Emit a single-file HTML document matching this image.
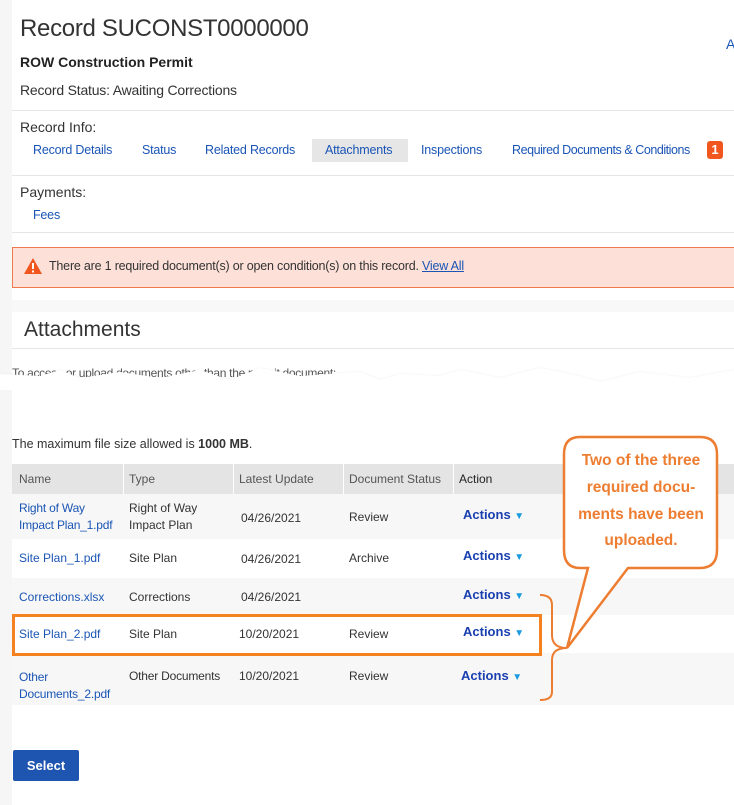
<!DOCTYPE html>
<html><head><style>
body{margin:0;width:734px;height:805px;background:#fff;font-family:"Liberation Sans",sans-serif;position:relative;overflow:hidden;font-size:12px;color:#333}
.a{position:absolute;white-space:nowrap}
a,.l{color:#1a55b5;text-decoration:none}
.n{font-size:12.5px;letter-spacing:-0.2px}
</style></head><body>
<div class="a" style="left:0;top:0;width:12px;height:805px;background:#f6f6f6"></div>
<div class="a" style="left:12px;top:300px;width:722px;height:12px;background:#f8f8f8"></div>
<div class="a" style="left:20px;top:15px;font-size:24px;color:#333;letter-spacing:-0.3px">Record SUCONST0000000</div>
<div class="a" style="left:726px;top:36px;font-size:14px;color:#1a55b5">A</div>
<div class="a" style="left:20px;top:54px;font-size:14px;font-weight:bold;color:#222">ROW Construction Permit</div>
<div class="a" style="left:20px;top:82px;font-size:14px;letter-spacing:-0.2px">Record Status: Awaiting Corrections</div>
<div class="a" style="left:12px;top:110px;width:722px;border-top:1px solid #e6e6e6"></div>
<div class="a" style="left:20px;top:119px;font-size:14px">Record Info:</div>
<div class="a" style="left:312px;top:139px;width:96px;height:23px;background:#e6e6e6"></div>
<div class="a l n" style="left:33px;top:143px">Record Details</div>
<div class="a l n" style="left:142px;top:143px">Status</div>
<div class="a l n" style="left:205px;top:143px">Related Records</div>
<div class="a l n" style="left:325px;top:143px">Attachments</div>
<div class="a l n" style="left:421px;top:143px">Inspections</div>
<div class="a l n" style="left:512px;top:143px;letter-spacing:-0.45px">Required Documents &amp; Conditions</div>
<div class="a" style="left:707px;top:141px;width:16px;height:18px;background:#f0561e;border-radius:3px;color:#fff;font-weight:bold;font-size:13px;text-align:center;line-height:18px">1</div>
<div class="a" style="left:12px;top:175px;width:722px;border-top:1px solid #e6e6e6"></div>
<div class="a" style="left:20px;top:184px;font-size:14px">Payments:</div>
<div class="a l n" style="left:33px;top:208px">Fees</div>
<div class="a" style="left:12px;top:232px;width:722px;border-top:1px solid #e6e6e6"></div>
<div class="a" style="left:12px;top:247px;width:722px;height:39px;background:#fde0d8;border:1px solid #f0784d;border-right:none"></div>
<svg class="a" style="left:23px;top:257px" width="20" height="18"><path d="M10 1 L19 17 L1 17Z" fill="#f0561e"/><rect x="9" y="6" width="2" height="6" fill="#fff"/><rect x="9" y="13.5" width="2" height="2" fill="#fff"/></svg>
<div class="a" style="left:49px;top:259px;font-size:12.5px;letter-spacing:-0.2px;color:#333">There are 1 required document(s) or open condition(s) on this record. <span style="color:#1a55b5;text-decoration:underline">View All</span></div>
<div class="a" style="left:24px;top:318px;font-size:21px;color:#333">Attachments</div>
<div class="a" style="left:12px;top:348px;width:722px;border-top:1px solid #e6e6e6"></div>
<div class="a" style="left:12px;top:366px;font-size:12px;color:#555;letter-spacing:-0.3px">To access or upload documents other than the permit document:</div>
<svg class="a" style="left:0;top:360px" width="734" height="30">
<defs><filter id="s"><feDropShadow dx="0" dy="2" stdDeviation="1.5" flood-color="#666" flood-opacity="0.7"/></filter></defs>
<path d="M0 14 L40 16 L60 10 L80 18 L120 12 L160 18 L200 10 L230 20 L260 8 L300 16 L360 12 L380 20 L400 14 L440 16 L460 10 L500 18 L540 8 L580 16 L600 22 L640 12 L690 18 L734 10 L734 30 L0 30Z" fill="#fff" filter="url(#s)"/></svg>
<div class="a" style="left:12px;top:437px;font-size:12.5px;color:#333">The maximum file size allowed is <b>1000 MB</b>.</div>
<div class="a" style="left:12px;top:464px;width:722px;height:30px;background:#e4e4e4"></div>
<div class="a" style="left:123px;top:464px;width:1px;height:30px;background:#fff"></div>
<div class="a" style="left:233px;top:464px;width:1px;height:30px;background:#fff"></div>
<div class="a" style="left:343px;top:464px;width:1px;height:30px;background:#fff"></div>
<div class="a" style="left:453px;top:464px;width:1px;height:30px;background:#fff"></div>
<div class="a" style="left:19px;top:472px;color:#555">Name</div>
<div class="a" style="left:129px;top:472px;color:#555">Type</div>
<div class="a" style="left:239px;top:472px;color:#555">Latest Update</div>
<div class="a" style="left:349px;top:472px;color:#555">Document Status</div>
<div class="a" style="left:459px;top:472px;color:#222">Action</div>
<div class="a" style="left:12px;top:494px;width:722px;height:45px;background:#f7f7f7"></div>
<div class="a" style="left:12px;top:578px;width:722px;height:37px;background:#f7f7f7"></div>
<div class="a" style="left:12px;top:653px;width:722px;height:52px;background:#f7f7f7"></div>
<div class="a l" style="left:19px;top:500px;line-height:17px;letter-spacing:-0.2px">Right of Way<br>Impact Plan_1.pdf</div>
<div class="a" style="left:129px;top:500px;line-height:17px">Right of Way<br>Impact Plan</div>
<div class="a" style="left:241px;top:511px">04/26/2021</div>
<div class="a" style="left:349px;top:510px">Review</div>
<div class="a l" style="left:19px;top:551px">Site Plan_1.pdf</div>
<div class="a" style="left:129px;top:551px">Site Plan</div>
<div class="a" style="left:241px;top:552px">04/26/2021</div>
<div class="a" style="left:349px;top:551px">Archive</div>
<div class="a l" style="left:19px;top:590px">Corrections.xlsx</div>
<div class="a" style="left:129px;top:590px">Corrections</div>
<div class="a" style="left:241px;top:590px">04/26/2021</div>
<div class="a l" style="left:19px;top:627px">Site Plan_2.pdf</div>
<div class="a" style="left:129px;top:627px">Site Plan</div>
<div class="a" style="left:239px;top:627px">10/20/2021</div>
<div class="a" style="left:349px;top:627px">Review</div>
<div class="a l" style="left:19px;top:669px;line-height:17px;letter-spacing:-0.2px">Other<br>Documents_2.pdf</div>
<div class="a" style="left:129px;top:669px;letter-spacing:-0.2px">Other Documents</div>
<div class="a" style="left:239px;top:669px">10/20/2021</div>
<div class="a" style="left:349px;top:669px">Review</div>
<div class="a" style="left:463px;top:507px;color:#1a40b0;font-weight:bold;font-size:13px">Actions <span style="color:#1a9be0;font-size:10px">▼</span></div>
<div class="a" style="left:463px;top:548px;color:#1a40b0;font-weight:bold;font-size:13px">Actions <span style="color:#1a9be0;font-size:10px">▼</span></div>
<div class="a" style="left:463px;top:587px;color:#1a40b0;font-weight:bold;font-size:13px">Actions <span style="color:#1a9be0;font-size:10px">▼</span></div>
<div class="a" style="left:463px;top:624px;color:#1a40b0;font-weight:bold;font-size:13px">Actions <span style="color:#1a9be0;font-size:10px">▼</span></div>
<div class="a" style="left:461px;top:668px;color:#1a40b0;font-weight:bold;font-size:13px">Actions <span style="color:#1a9be0;font-size:10px">▼</span></div>
<div class="a" style="left:12px;top:614px;width:524px;height:36px;border:3px solid #f58220"></div>
<div class="a" style="left:13px;top:750px;width:66px;height:31px;background:#1e55b0;border-radius:2px;color:#fff;font-weight:bold;font-size:13px;text-align:center;line-height:31px">Select</div>
<svg class="a" style="left:530px;top:430px" width="204" height="280">
<path d="M50 7 L170 7 Q187 7 187 24 L187 120 Q187 138 170 138 L98 138 L37 218 L58 138 L50 138 Q34 138 34 120 L34 24 Q34 7 50 7Z" fill="#fff" stroke="#ed7d31" stroke-width="2.5"/>
<path d="M10 165 Q22 165 22 175 L22 205 Q22 218 37 218 Q22 218 22 230 L22 262 Q22 270 10 270" fill="none" stroke="#ed7d31" stroke-width="2"/>
<text x="111" y="35" text-anchor="middle" font-family="Liberation Sans,sans-serif" font-weight="bold" font-size="15.5" fill="#ed7d31">Two of the three</text>
<text x="111" y="62" text-anchor="middle" font-family="Liberation Sans,sans-serif" font-weight="bold" font-size="15.5" fill="#ed7d31">required docu-</text>
<text x="111" y="89" text-anchor="middle" font-family="Liberation Sans,sans-serif" font-weight="bold" font-size="15.5" fill="#ed7d31">ments have been</text>
<text x="111" y="115" text-anchor="middle" font-family="Liberation Sans,sans-serif" font-weight="bold" font-size="15.5" fill="#ed7d31">uploaded.</text>
</svg>
</body></html>
